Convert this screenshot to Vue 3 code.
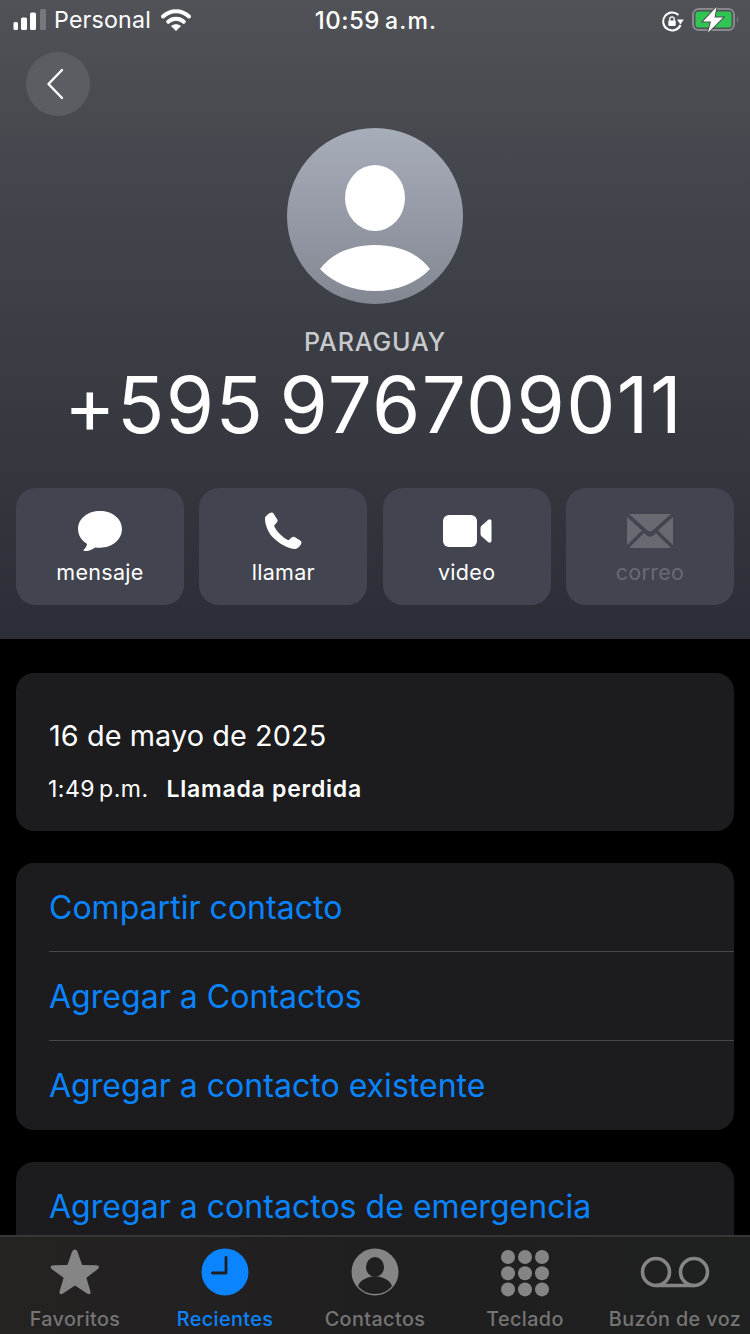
<script setup>
const actions = [
  { key: 'msg', label: 'mensaje' },
  { key: 'call', label: 'llamar' },
  { key: 'video', label: 'video' },
  { key: 'mail', label: 'correo', off: true }
]
const tabs = [
  { key: 'fav', label: 'Favoritos' },
  { key: 'rec', label: 'Recientes', on: true },
  { key: 'con', label: 'Contactos' },
  { key: 'key', label: 'Teclado' },
  { key: 'vm', label: 'Buzón de voz' }
]
const dots = [0, 1, 2].flatMap(r => [0, 1, 2].map(c => ({ x: 7 + c * 17, y: 7 + r * 16.2 })))
const links = ['Compartir contacto', 'Agregar a Contactos', 'Agregar a contacto existente']
</script>

<template>
  <div class="screen">
    <div class="main">
      <header class="hero">
        <div class="status">
          <div class="st-left">
            <svg width="36" height="22" viewBox="0 0 36 22" class="signal">
              <rect x="1.500" y="13" width="4.500" height="8" rx="1.500" fill="#fff"/>
              <rect x="9" y="8.500" width="6" height="12.500" rx="1.500" fill="#fff"/>
              <rect x="18" y="3.500" width="6" height="17.500" rx="1.500" fill="#fff"/>
              <rect x="28" y="0" width="6" height="21" rx="1.500" fill="#77787c"/>
            </svg>
            <span class="carrier">Personal</span>
            <svg width="30" height="24" viewBox="0 0 30 24" class="wifi">
              <path d="M2 8.500C9.500 1.500 20.500 1.500 28 8.500" fill="none" stroke="#fff" stroke-width="4" stroke-linecap="round"/>
              <path d="M7.200 13.800C11.800 9.800 18.200 9.800 22.800 13.800" fill="none" stroke="#fff" stroke-width="4" stroke-linecap="round"/>
              <path d="M15 23 10 18C13 15.600 17 15.600 20 18Z" fill="#fff"/>
            </svg>
          </div>
          <div class="clock">10:59<span class="ampm">a.m.</span></div>
          <div class="st-right">
            <svg width="24" height="24" viewBox="0 0 24 24">
              <path d="M19.500 17A9 9 0 1 1 17.500 7" fill="none" stroke="#fff" stroke-width="2"/>
              <path d="M16 11.500h6.800L19.400 16.500Z" fill="#fff"/>
              <rect x="7.300" y="12.500" width="7.400" height="5.500" rx="1" fill="#fff"/>
              <path d="M8.800 13V11a2.200 2.200 0 0 1 4.400 0V13" fill="none" stroke="#fff" stroke-width="1.300"/>
            </svg>
            <svg width="50" height="30" viewBox="0 0 50 30" class="battery">
              <rect x="1" y="4" width="41" height="21" rx="5.500" fill="none" stroke="#88898c" stroke-width="2"/>
              <rect x="3.500" y="6.500" width="36" height="16" rx="3" fill="#30c552"/>
              <path d="M45 11.500c1.800.5 1.800 6 0 6.500Z" fill="#77787c"/>
              <path d="M24.500 2 11 16.500h8L16 27.500 31 12.500h-8.500Z" fill="#fff" stroke="#4d4e53" stroke-width="2" paint-order="stroke"/>
            </svg>
          </div>
        </div>

        <button class="back" aria-label="Atrás">
          <svg width="22" height="32" viewBox="0 0 22 32">
            <path d="M18 2 4.500 16 18 30" fill="none" stroke="#fff" stroke-width="2.400" stroke-linecap="round" stroke-linejoin="round"/>
          </svg>
        </button>

        <div class="avatar">
          <svg width="176" height="176" viewBox="0 0 176 176">
            <ellipse cx="88" cy="70" rx="30" ry="33" fill="#fff"/>
            <path d="M33 141C46 124 66 117 88 117s42 7 55 24C130 155 110 163 88 163s-42-8-55-22Z" fill="#fff"/>
          </svg>
        </div>

        <div class="country">PARAGUAY</div>
        <div class="number">+595 976709011</div>

        <div class="actions">
          <div v-for="a in actions" :key="a.key" class="action" :class="{ off: a.off }">
            <div class="a-icon">
              <svg v-if="a.key === 'msg'" width="46" height="42" viewBox="0 0 48 44">
                <path d="M24 1C11 1 1 9 1 20c0 6.500 3.500 12 9.500 15.500-.6 2.500-2 4.800-3.500 6-.6.6-.2 1.500.7 1.500 4 0 8-1.300 11.300-3.800 1.600.3 3.200.4 5 .4 13 0 23-8.600 23-19.600S37 1 24 1Z" fill="#fff"/>
              </svg>
              <svg v-else-if="a.key === 'call'" class="phone" width="39" height="39" viewBox="0 0 40 40">
                <path d="M2 7.500C2 5.500 6.500 1.500 8.800 1.500c1 0 1.700.6 2.300 1.500l3.400 5.400c.8 1.300.5 2.500-.4 3.500l-2 2.200c-.6.700-.6 1.500-.2 2.300 1 2 3 4.800 5.400 7.300 2.600 2.600 5.500 4.700 7.600 5.800.8.400 1.600.3 2.200-.3l2.200-2c1-.9 2.300-1.200 3.500-.4l5 3.200c1 .6 1.700 1.400 1.700 2.400 0 2.500-4 6.600-6.400 6.600C26 39 15.500 33 9.500 26.500 4.500 21 2 13 2 7.500Z" fill="#fff"/>
              </svg>
              <svg v-else-if="a.key === 'video'" width="50" height="34" viewBox="0 0 50 34">
                <rect x="1" y="1" width="34" height="32" rx="6" fill="#fff"/>
                <path d="M38.500 14.500c0-1.300.4-2.200 1.300-3L46 6c1.600-1.300 3.500-.7 3.500 1.500v19c0 2.200-1.900 2.800-3.500 1.500l-6.200-5.500c-.9-.8-1.300-1.700-1.300-3Z" fill="#fff"/>
              </svg>
              <svg v-else width="48" height="36" viewBox="0 0 48 36">
                <path d="M3 1h42L26.500 17.500c-1.500 1.300-3.500 1.300-5 0Z" fill="#686a72"/>
                <path d="M1 4v28l15-14.500ZM47 4v28L32 17.500Z" fill="#686a72"/>
                <path d="M3 35h42L30 20l-2 2c-2.400 2.200-5.600 2.200-8 0l-2-2Z" fill="#686a72"/>
              </svg>
            </div>
            <div class="a-label">{{ a.label }}</div>
          </div>
        </div>
      </header>

      <section class="card call">
        <div class="date">16 de mayo de 2025</div>
        <div class="call-line">
          <span class="time">1:49<span class="ampm2">p.m.</span></span>
          <span class="missed">Llamada perdida</span>
        </div>
      </section>

      <section class="card links">
        <div v-for="l in links" :key="l" class="link">{{ l }}</div>
      </section>

      <section class="card links">
        <div class="link">Agregar a contactos de emergencia</div>
      </section>
    </div>

    <nav class="tabbar">
      <div v-for="t in tabs" :key="t.key" class="tab" :class="{ on: t.on }">
        <div class="t-icon">
          <svg v-if="t.key === 'fav'" width="52" height="49" viewBox="0 0 54 50">
            <path d="M27 1c1.300 0 2.100 1 2.600 2.400l4.800 13.800 14.600.4c3 .1 3.800 2.300 1.500 4L38.800 30.400l4.200 14c.8 2.800-1.100 4.200-3.500 2.500L27 38.600 14.500 46.900c-2.400 1.700-4.300.3-3.500-2.500l4.200-14L3 21.600c-2.300-1.700-1.500-3.900 1.500-4l14.600-.4 4.800-13.800C24.400 2 25.700 1 27 1Z" fill="#858585"/>
          </svg>
          <svg v-else-if="t.key === 'rec'" width="48" height="48" viewBox="0 0 48 48">
            <circle cx="24" cy="24" r="23.500" fill="#0a84ff"/>
            <path d="M25 9.500V25H11.500" fill="none" stroke="#1f2024" stroke-width="2.800" stroke-linecap="round" stroke-linejoin="round"/>
          </svg>
          <svg v-else-if="t.key === 'con'" width="48" height="48" viewBox="0 0 48 48">
            <circle cx="24" cy="24" r="23.500" fill="#858585"/>
            <ellipse cx="24" cy="19" rx="9" ry="10" fill="#202020"/>
            <path d="M7 38c3-7 10-9.500 17-9.500S38 31 41 38c-4 5-10 8-17 8S11 43 7 38Z" fill="#202020"/>
          </svg>
          <svg v-else-if="t.key === 'key'" class="keypad" width="48" height="48" viewBox="0 0 48 48">
            <circle v-for="(d, i) in dots" :key="i" :cx="d.x" :cy="d.y" r="7" fill="#858585"/>
          </svg>
          <svg v-else width="70" height="32" viewBox="0 0 70 32">
            <circle cx="16" cy="16" r="13.500" fill="none" stroke="#858585" stroke-width="3.600"/>
            <circle cx="54" cy="16" r="13.500" fill="none" stroke="#858585" stroke-width="3.600"/>
            <path d="M16 29.500h38" stroke="#858585" stroke-width="3.600"/>
          </svg>
        </div>
        <div class="t-label">{{ t.label }}</div>
      </div>
    </nav>
  </div>
</template>

<style>
html, body { margin: 0; background: #000; }
</style>

<style scoped>
.screen {
  width: 750px;
  height: 1334px;
  display: flex;
  flex-direction: column;
  background: #000;
  overflow: hidden;
  font-family: Inter, "Liberation Sans", sans-serif;
  color: #fff;
}
.main { flex: 1; min-height: 0; overflow: hidden; }
.hero {
  height: 639px;
  box-sizing: border-box;
  background: linear-gradient(180deg, #515257 0%, #43454c 30%, #2c2e37 100%);
  display: flex;
  flex-direction: column;
  align-items: center;
}
.status {
  width: 100%;
  height: 40px;
  box-sizing: border-box;
  padding: 0 12px;
  display: grid;
  grid-template-columns: 1fr auto 1fr;
  align-items: center;
}
.st-left { display: flex; align-items: center; }
.signal { margin-right: 6px; }
.carrier { font-size: 23.200px; font-weight: 400; letter-spacing: .2px; }
.wifi { margin-left: 10px; }
.clock { font-size: 24px; font-weight: 500; letter-spacing: .5px; margin-left: 2px; }
.ampm { margin-left: 5px; font-size: 23px; letter-spacing: 1.200px; }
.st-right { display: flex; justify-content: flex-end; align-items: center; gap: 7px; margin-right: -4px; }
.back {
  align-self: flex-start;
  margin: 12px 0 0 26px;
  width: 64px;
  height: 64px;
  border: 0;
  padding: 0 6px 0 0;
  border-radius: 50%;
  background: #5c5d62;
  display: flex;
  align-items: center;
  justify-content: center;
}
.avatar {
  margin-top: 12px;
  width: 176px;
  height: 176px;
  border-radius: 50%;
  background: linear-gradient(180deg, #a8adba 0%, #838792 100%);
}
.country {
  margin-top: 24px;
  height: 29px;
  line-height: 29px;
  font-size: 25px;
  font-weight: 500;
  letter-spacing: .9px;
  color: #c9cacc;
}
.number {
  margin: 10px 0 0 -3px;
  height: 76px;
  line-height: 76px;
  font-size: 78px;
  font-weight: 400;
  letter-spacing: 1.350px;
  word-spacing: -8px;
  white-space: nowrap;
}
.actions {
  margin-top: 45px;
  width: 100%;
  box-sizing: border-box;
  padding: 0 16px;
  display: grid;
  grid-template-columns: repeat(4, 168px);
  justify-content: space-between;
}
.action {
  height: 117px;
  border-radius: 20px;
  background: #42444f;
  display: flex;
  flex-direction: column;
  align-items: center;
}
.a-icon {
  height: 46px;
  margin-top: 20px;
  display: flex;
  align-items: center;
  justify-content: center;
}
.phone { margin: -2px 2px 0 0; }
.a-label {
  margin-top: 5px;
  font-size: 21.500px;
  line-height: 26px;
  letter-spacing: .3px;
}
.action.off .a-label { color: #686a72; }
.card {
  margin: 0 16px;
  border-radius: 18px;
  background: #1c1c1e;
}
.call {
  margin-top: 34px;
  height: 158px;
  box-sizing: border-box;
  padding: 45px 33px 0;
}
.date { font-size: 28.800px; line-height: 36px; letter-spacing: .1px; }
.call-line {
  margin-top: 21px;
  display: flex;
  align-items: baseline;
  font-size: 23px;
  line-height: 28px;
}
.time { letter-spacing: .5px; margin-left: -1px; }
.ampm2 { margin-left: 4px; }
.missed { margin-left: 18px; font-weight: 600; letter-spacing: .75px; }
.links { margin-top: 32px; padding-left: 33px; color: #0a84ff; }
.link {
  height: 89px;
  box-sizing: border-box;
  line-height: 90px;
  font-size: 32px;
  letter-spacing: .03px;
  border-bottom: 1px solid #48484a;
  white-space: nowrap;
}
.link:last-child { border-bottom: 0; }
.tabbar {
  height: 99px;
  flex: none;
  box-sizing: border-box;
  border-top: 2px solid #363637;
  background: linear-gradient(90deg, #252222 0%, #201f20 50%, #1f2020 100%);
  display: grid;
  grid-template-columns: repeat(5, 150px);
}
.tab {
  display: flex;
  flex-direction: column;
  align-items: center;
}
.t-icon {
  height: 50px;
  margin-top: 10px;
  display: flex;
  align-items: center;
  justify-content: center;
}
.keypad { margin: 4px 0 0 -1px; }
.t-label {
  margin-top: 10px;
  font-size: 19.800px;
  line-height: 24px;
  font-weight: 500;
  letter-spacing: .4px;
  color: #757575;
  white-space: nowrap;
}
.tab.on .t-label { color: #0a84ff; }
</style>
